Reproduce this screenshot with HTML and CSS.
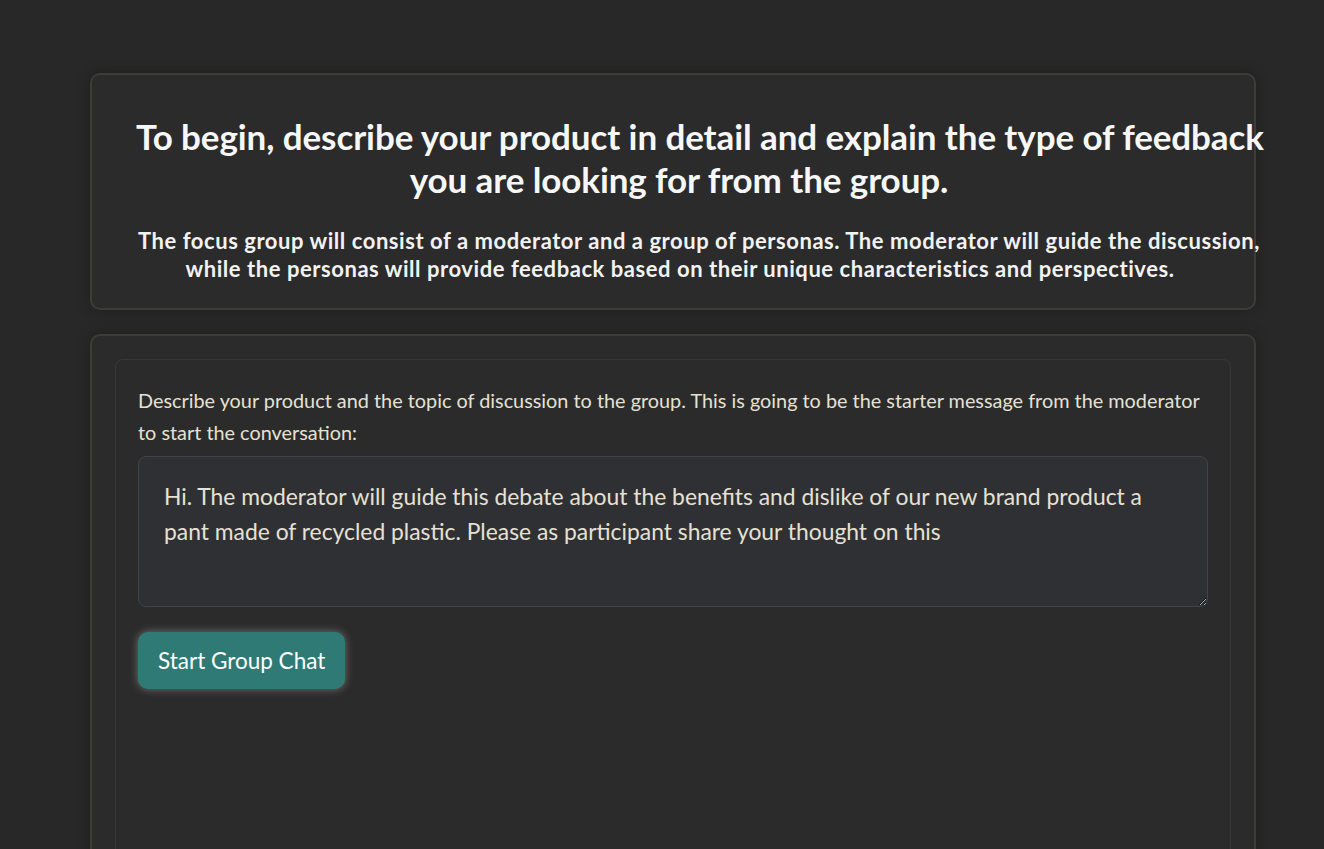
FILE: index.html
```html
<!DOCTYPE html>
<html lang="en">
<head>
<meta charset="utf-8">
<title>Focus Group</title>
<link rel="stylesheet" href="styles.css">
</head>
<body>
<main class="page">
  <section class="card intro">
    <div class="intro-text">
      <h1 class="title"><span class="line">To begin, describe your product in detail and explain the type of feedback</span><br><span class="line">you are looking for from the group.</span></h1>
      <p class="lead"><span class="line">The focus group will consist of a moderator and a group of personas. The moderator will guide the discussion,</span><br><span class="line">while the personas will provide feedback based on their unique characteristics and perspectives.</span></p>
    </div>
  </section>
  <section class="card form-card">
    <div class="panel">
      <label class="field-label" for="starter">Describe your product and the topic of discussion to the group. This is going to be the starter message from the moderator to start the conversation:</label>
      <textarea id="starter" class="field-input" rows="3">Hi. The moderator will guide this debate about the benefits and dislike of our new brand product a pant made of recycled plastic. Please as participant share your thought on this</textarea>
      <div class="actions">
        <button class="btn-primary" type="button">Start Group Chat</button>
      </div>
    </div>
  </section>
</main>
</body>
</html>
```

FILE: styles.css
```css
html, body {
  margin: 0;
  padding: 0;
  background: #272827;
}
body {
  font-family: Lato, "Noto Sans", sans-serif;
  color: #f2f2f2;
  overflow: hidden;
}
.page {
  padding: 73px 68px 0 90px;
  display: flex;
  flex-direction: column;
  gap: 24px;
}
.card {
  background: #2a2b2a;
  border: 2px solid #3c3d39;
  border-radius: 10px;
  box-shadow: 0 0 14px rgba(0, 0, 0, 0.25);
}
.intro {
  padding: 40px 32px 25px 46px;
}
.intro-text {
  text-align: center;
}
.line {
  white-space: nowrap;
}
.title {
  margin: 0 0 0 -2px;
  font-size: 35px;
  line-height: 43px;
  font-weight: 700;
  color: #f7f7f7;
  letter-spacing: -0.1px;
}
.lead {
  margin: 26px 0 0;
  font-size: 22px;
  line-height: 28px;
  font-weight: 700;
  color: #f2f2f2;
  letter-spacing: 0.55px;
}
.form-card {
  padding: 23px 23px 0 23px;
}
.panel {
  border: 1px solid #363837;
  border-bottom: none;
  border-radius: 8px 8px 0 0;
  padding: 24px 22px 0 22px;
  min-height: 520px;
  display: flex;
  flex-direction: column;
}
.field-label {
  font-size: 19.85px;
  line-height: 32px;
  color: #e6e1d4;
}
.field-input {
  margin-top: 8px;
  height: 151px;
  box-sizing: border-box;
  padding: 22px 32px 22px 25px;
  background: #2f3033;
  border: 1px solid #41434b;
  border-radius: 8px;
  color: #e6e1d4;
  font-family: Lato, "Noto Sans", sans-serif;
  font-size: 22.85px;
  line-height: 35px;
  resize: vertical;
  outline: none;
}
.actions {
  margin-top: 25px;
  display: flex;
}
.btn-primary {
  height: 57px;
  padding: 0 20px;
  background: #2f7a75;
  color: #ffffff;
  border: none;
  border-radius: 10px;
  font-family: Lato, "Noto Sans", sans-serif;
  font-size: 22.5px;
  box-shadow: 0 0 8px rgba(255, 255, 255, 0.35);
}
```
